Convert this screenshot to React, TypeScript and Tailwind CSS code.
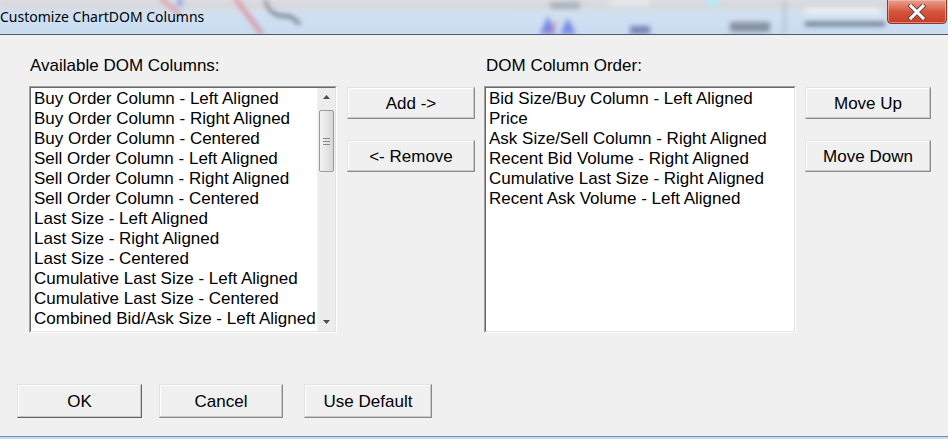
const available = [
  "Buy Order Column - Left Aligned",
  "Buy Order Column - Right Aligned",
  "Buy Order Column - Centered",
  "Sell Order Column - Left Aligned",
  "Sell Order Column - Right Aligned",
  "Sell Order Column - Centered",
  "Last Size - Left Aligned",
  "Last Size - Right Aligned",
  "Last Size - Centered",
  "Cumulative Last Size - Left Aligned",
  "Cumulative Last Size - Centered",
  "Combined Bid/Ask Size - Left Aligned",
];

const order = [
  "Bid Size/Buy Column - Left Aligned",
  "Price",
  "Ask Size/Sell Column - Right Aligned",
  "Recent Bid Volume - Right Aligned",
  "Cumulative Last Size - Right Aligned",
  "Recent Ask Volume - Left Aligned",
];

function Btn({ label, className = "" }: { label: string; className?: string }) {
  return (
    <button
      className={`flex shrink-0 items-center justify-center border border-t-[#e3e3e3] border-l-[#e3e3e3] border-r-[#8a8a8a] border-b-[#8a8a8a] bg-[#f0f0f0] pt-[2px] text-[17px] text-black shadow-[inset_-1px_-1px_0_#c8c8c8,inset_1px_1px_0_#ffffff] ${className}`}
    >
      {label}
    </button>
  );
}

function ListBox({ items, scroll }: { items: string[]; scroll?: boolean }) {
  return (
    <div className="flex h-[247px] border border-t-[#a0a0a0] border-l-[#a0a0a0] border-r-[#ffffff] border-b-[#ffffff]">
      <div className="flex flex-1 border border-t-[#696969] border-l-[#696969] border-r-[#e3e3e3] border-b-[#e3e3e3] bg-white">
        <ul className="flex-1 overflow-hidden pl-[3px] pt-[1px] text-[17px] leading-[20px] text-black">
          {items.map((t) => (
            <li key={t} className="whitespace-nowrap">{t}</li>
          ))}
        </ul>
        {scroll && <ScrollBar />}
      </div>
    </div>
  );
}

function ScrollBar() {
  return (
    <div className="flex w-[18px] shrink-0 flex-col border-l border-[#f2f2f2] bg-[#ececec]">
      <div className="flex h-[18px] items-center justify-center">
        <svg width="7" height="4" viewBox="0 0 7 4">
          <path d="M0 4 L3.5 0 L7 4 Z" fill="#4d4d4d" />
        </svg>
      </div>
      <div className="mx-[1px] mt-[4px] flex h-[62px] flex-col items-center justify-center gap-[2px] rounded-[2px] border border-[#9b9b9b] bg-gradient-to-r from-[#f3f3f3] via-[#e6e6e6] to-[#d6d6d6]">
        <div className="h-[1px] w-[7px] bg-[#8a8a8a]" />
        <div className="h-[1px] w-[7px] bg-[#8a8a8a]" />
        <div className="h-[1px] w-[7px] bg-[#8a8a8a]" />
      </div>
      <div className="flex-1" />
      <div className="flex h-[18px] items-center justify-center">
        <svg width="7" height="4" viewBox="0 0 7 4">
          <path d="M0 0 L3.5 4 L7 0 Z" fill="#4d4d4d" />
        </svg>
      </div>
    </div>
  );
}

function TitleBar() {
  return (
    <div className="relative h-[35px] shrink-0 overflow-hidden border-b border-[#4b5b6b] bg-gradient-to-b from-[#dcdde2] via-[#cfe0f2] to-[#c9dcf0]">
      <svg className="absolute inset-0" width="948" height="34" viewBox="0 0 948 34">
        <defs>
          <filter id="b" x="-20%" y="-50%" width="140%" height="200%">
            <feGaussianBlur stdDeviation="2.6" />
          </filter>
        </defs>
        <g filter="url(#b)" opacity="0.75">
          <rect x="0" y="3" width="948" height="5" fill="#d8d4d6" />
          <path d="M160 -2 L180 14" stroke="#e06070" strokeWidth="3" />
          <circle cx="180" cy="3" r="3" fill="#5060e0" />
          <path d="M235 -2 L262 34" stroke="#e07080" strokeWidth="4" />
          <path d="M265 0 Q270 18 290 16 L300 24" stroke="#404850" strokeWidth="3" fill="none" />
          <path d="M540 34 L548 16 L556 34 Z M560 34 L568 18 L576 34 Z" fill="#5a6ae0" />
          <path d="M550 34 L556 22" stroke="#c05060" strokeWidth="2" />
          <rect x="550" y="2" width="30" height="7" fill="#9aa0aa" />
          <rect x="610" y="1" width="40" height="4" fill="#f4f4f4" />
          <rect x="630" y="26" width="20" height="8" fill="#5a68a0" />
          <rect x="730" y="22" width="40" height="10" fill="#707884" />
          <rect x="707" y="0" width="12" height="6" fill="#a0f0ff" />
          <rect x="783" y="0" width="3" height="34" fill="#aab8c8" />
          <rect x="805" y="8" width="75" height="6" fill="#f4f6f8" />
          <rect x="805" y="22" width="80" height="4" fill="#3c4a5a" />
        </g>
      </svg>
      <div className="absolute left-0 top-[6px] font-['Noto_Sans',sans-serif] text-[14px] leading-[22px] text-black">
        Customize ChartDOM Columns
      </div>
      <div className="absolute right-[1px] top-[-1px] flex h-[25px] w-[60px] items-center justify-center rounded-b-[4px] border border-[#8a3a2e] bg-gradient-to-b from-[#e8a090] via-[#d6553e] to-[#c63c22] shadow-[inset_0_0_0_1px_rgba(255,200,190,0.5)]">
        <svg width="18" height="16" viewBox="0 0 18 16">
          <path d="M3 2 L15 14 M15 2 L3 14" stroke="#6a4a46" strokeWidth="5" strokeLinecap="square" />
          <path d="M3 2 L15 14 M15 2 L3 14" stroke="#ffffff" strokeWidth="3" strokeLinecap="square" />
        </svg>
      </div>
    </div>
  );
}

export default function App() {
  return (
    <div className="flex h-[439px] w-[948px] flex-col overflow-hidden bg-[#f0f0f0] font-['Liberation_Sans',Arial,sans-serif]">
      <TitleBar />
      <div className="flex flex-1 flex-col pl-[29px] pt-[21px]">
        <div className="flex">
          <div className="flex w-[308px] shrink-0 flex-col">
            <div className="h-[30px] pl-[1px] pt-[1px] text-[17px] leading-[18px] text-black">Available DOM Columns:</div>
            <ListBox items={available} scroll />
          </div>
          <div className="ml-[10px] flex w-[128px] shrink-0 flex-col gap-[21px] pt-[31px]">
            <Btn label="Add ->" className="h-[32px]" />
            <Btn label="<- Remove" className="h-[32px]" />
          </div>
          <div className="ml-[9px] flex w-[312px] shrink-0 flex-col">
            <div className="h-[30px] pl-[2px] pt-[1px] text-[17px] leading-[18px] text-black">DOM Column Order:</div>
            <ListBox items={order} />
          </div>
          <div className="ml-[9px] flex w-[126px] shrink-0 flex-col gap-[21px] pt-[31px]">
            <Btn label="Move Up" className="h-[32px]" />
            <Btn label="Move Down" className="h-[32px]" />
          </div>
        </div>
        <div className="-ml-[12px] mt-[51px] flex">
          <Btn label="OK" className="h-[34px] w-[125px] border-r-[#646464] border-b-[#646464] border-l-[#646464]" />
          <Btn label="Cancel" className="ml-[17px] h-[34px] w-[124px]" />
          <Btn label="Use Default" className="ml-[21px] h-[34px] w-[128px]" />
        </div>
      </div>
      <div className="h-[3px] shrink-0 border-t border-[#7492b8] bg-[#c8dbef]" />
    </div>
  );
}
